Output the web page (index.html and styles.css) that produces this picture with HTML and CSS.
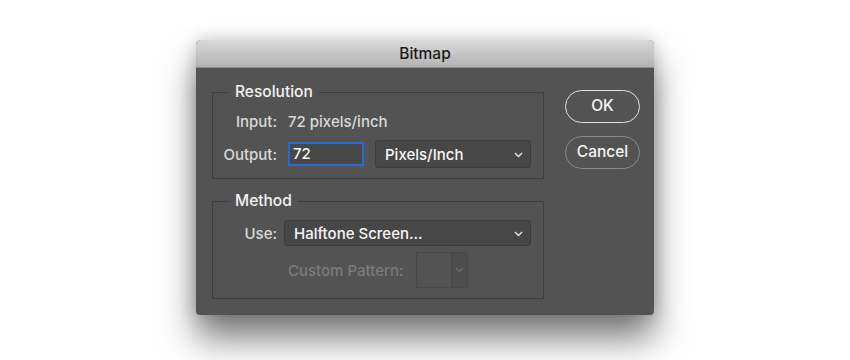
FILE: index.html
```html
<!DOCTYPE html>
<html>
<head>
<meta charset="utf-8">
<link rel="stylesheet" href="styles.css">
</head>
<body>
<div class="window">
  <div class="titlebar">Bitmap</div>
  <div class="content">
    <div class="groups">
      <fieldset class="group res">
        <legend>Resolution</legend>
        <div class="row input-row">
          <span class="label">Input:</span>
          <span class="value">72 pixels/inch</span>
        </div>
        <div class="row output-row">
          <span class="label">Output:</span>
          <div class="field">72</div>
          <div class="select unit">
            <span>Pixels/Inch</span>
            <svg class="chev" width="9" height="6" viewBox="0 0 9 6"><polyline points="1,1 4.5,4.5 8,1" fill="none" stroke="#e8e8e8" stroke-width="1.4"/></svg>
          </div>
        </div>
      </fieldset>
      <fieldset class="group method">
        <legend>Method</legend>
        <div class="row use-row">
          <span class="label">Use:</span>
          <div class="select use">
            <span>Halftone Screen...</span>
            <svg class="chev" width="9" height="6" viewBox="0 0 9 6"><polyline points="1,1 4.5,4.5 8,1" fill="none" stroke="#e8e8e8" stroke-width="1.4"/></svg>
          </div>
        </div>
        <div class="row custom-row">
          <span class="label-dim">Custom Pattern:</span>
          <div class="pattern">
            <div class="swatch"></div>
            <div class="pat-arrow">
              <svg width="9" height="6" viewBox="0 0 9 6"><polyline points="1,1 4.5,4.5 8,1" fill="none" stroke="#707070" stroke-width="1.2"/></svg>
            </div>
          </div>
        </div>
      </fieldset>
    </div>
    <div class="buttons">
      <div class="btn ok">OK</div>
      <div class="btn cancel">Cancel</div>
    </div>
  </div>
</div>
</body>
</html>
```
FILE: styles.css
```css
html, body {
  margin: 0;
  padding: 0;
  background: #ffffff;
}
body {
  width: 850px;
  height: 360px;
  overflow: hidden;
  font-family: Inter, "Open Sans", "Liberation Sans", sans-serif;
  font-size: 15px;
  font-weight: 500;
}
.window {
  margin-left: 196px;
  margin-top: 40px;
  width: 458px;
  height: 275px;
  box-sizing: border-box;
  background: #535353;
  border-radius: 5px 5px 4px 4px;
  box-shadow: 0 24px 34px rgba(0, 0, 0, 0.5), 0 0 18px rgba(0, 0, 0, 0.2);
  overflow: hidden;
}
.titlebar {
  height: 28px;
  box-sizing: border-box;
  background: linear-gradient(#d9d9d9, #b3b3b3);
  border-bottom: 1px solid #8c8c8c;
  text-align: center;
  line-height: 28px;
  color: #1a1a1a;
  font-size: 15.5px;
}
.content {
  display: flex;
  align-items: flex-start;
  padding: 15px 13px 14px 16px;
}
.groups {
  width: 332px;
}
.group {
  margin: 0;
  padding: 10px 0 10px 0;
  border: 1px solid #3f3f3f;
  min-width: 0;
}
.group legend {
  margin-left: 16px;
  padding: 0 6px;
  line-height: 18px;
  color: #f2f2f2;
  font-size: 15.5px;
}
.method {
  margin-top: 13px;
}
.row {
  display: flex;
  align-items: center;
}
.label {
  width: 64px;
  text-align: right;
  color: #dadada;
}
.value {
  margin-left: 11px;
  color: #dadada;
}
.input-row {
  height: 20px;
}
.output-row {
  margin-top: 9px;
  height: 28px;
}
.field {
  margin-left: 11px;
  width: 76px;
  height: 24px;
  box-sizing: border-box;
  border: 2px solid #2a6ad0;
  background: #474747;
  color: #f6f6f6;
  padding-left: 3px;
  line-height: 20px;
}
.select {
  display: flex;
  align-items: center;
  justify-content: space-between;
  box-sizing: border-box;
  background: #474747;
  border: 1px solid #3d3d3d;
  border-radius: 3px;
  color: #f6f6f6;
  padding: 0 7px 0 9px;
}
.select .chev {
  margin-top: 1px;
}
.unit {
  margin-left: 11px;
  width: 156px;
  height: 28px;
}
.use-row {
  height: 26px;
}
.use {
  margin-left: 7px;
  width: 247px;
  height: 26px;
}
.custom-row {
  margin-top: 6px;
  height: 36px;
  padding-left: 75px;
}
.label-dim {
  color: #7c7c7c;
}
.pattern {
  margin-left: 12px;
  width: 52px;
  height: 36px;
  box-sizing: border-box;
  border: 1px solid #484848;
  border-radius: 2px;
  display: flex;
}
.swatch {
  flex: 1;
  border-right: 1px solid #484848;
}
.pat-arrow {
  width: 15px;
  background: #4d4d4d;
  display: flex;
  align-items: center;
  justify-content: center;
}
.buttons {
  margin-left: 21px;
  margin-top: 7px;
  display: flex;
  flex-direction: column;
  gap: 13px;
}
.btn {
  width: 75px;
  height: 33px;
  box-sizing: border-box;
  border-radius: 17px;
  text-align: center;
  line-height: 30px;
  color: #f6f6f6;
  font-size: 15.5px;
}
.ok {
  border: 1.5px solid #e2e2e2;
}
.cancel {
  border: 1.5px solid #8a8a8a;
}
```
